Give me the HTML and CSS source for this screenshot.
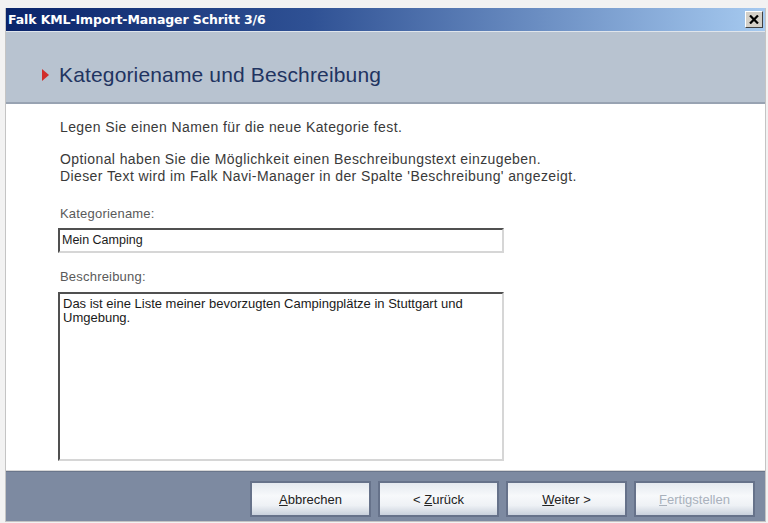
FILE: index.html
```html
<!DOCTYPE html>
<html lang="de">
<head>
  <meta charset="UTF-8">
  <title>Falk KML-Import-Manager</title>
  <link rel="stylesheet" href="styles.css">
</head>
<body>

  <div class="dialog">
    <!-- Titelleiste -->
    <div class="titlebar">
      <span class="title">Falk KML-Import-Manager Schritt 3/6</span>
      <span class="close-btn">
        <svg width="10" height="9" viewBox="0 0 10 9">
          <path d="M1 0.5 L9 8.5 M9 0.5 L1 8.5" stroke="#000" stroke-width="2.2"/>
        </svg>
      </span>
    </div>

    <!-- Kopfbereich -->
    <div class="header">
      <span class="arrow"></span>
      <h1>Kategoriename und Beschreibung</h1>
    </div>

    <!-- Inhalt -->
    <div class="content">
      <p class="intro">Legen Sie einen Namen für die neue Kategorie fest.</p>
      <p class="intro second">Optional haben Sie die Möglichkeit einen Beschreibungstext einzugeben.<br>
        Dieser Text wird im Falk Navi-Manager in der Spalte 'Beschreibung' angezeigt.</p>

      <div class="label">Kategoriename:</div>
      <div class="field">Mein Camping</div>

      <div class="label label-desc">Beschreibung:</div>
      <div class="field area">Das ist eine Liste meiner bevorzugten Campingplätze in Stuttgart und<br>Umgebung.</div>
    </div>

    <!-- Knopfleiste -->
    <div class="footer">
      <button class="btn"><u>A</u>bbrechen</button>
      <button class="btn">&lt; <u>Z</u>urück</button>
      <button class="btn"><u>W</u>eiter &gt;</button>
      <button class="btn disabled"><u>F</u>ertigstellen</button>
    </div>
  </div>

</body>
</html>
```

FILE: styles.css
```css
body {
  margin: 0;
  padding: 8px 0 0 5px;
  background: #f2f2f2;
  font-family: 'Liberation Sans', Arial, sans-serif;
}

.dialog {
  width: 759px;
  border: 1px solid #c4c4c4;
  border-top: none;
  background: #fff;
}

.titlebar {
  height: 23px;
  display: flex;
  align-items: center;
  justify-content: space-between;
  padding: 0 2px 0 2px;
  background: linear-gradient(to right, #0a246a 0%, #2f5194 40%, #a6caf0 100%);
}

.title {
  color: #fff;
  font-family: 'DejaVu Sans', Verdana, sans-serif;
  font-weight: bold;
  font-size: 12.5px;
  letter-spacing: -0.1px;
}

.close-btn {
  width: 16px;
  height: 15px;
  display: flex;
  align-items: center;
  justify-content: center;
  background: #d4d0c8;
  border: 1px solid;
  border-color: #fff #404040 #404040 #fff;
}

.header {
  height: 73px;
  box-sizing: border-box;
  display: flex;
  align-items: center;
  padding: 16px 0 0 36px;
  background: #b8c3d0;
  border-top: 1px solid #dfe5ec;
  border-bottom: 2px solid #98a3b2;
}

.arrow {
  width: 0;
  height: 0;
  margin-right: 10px;
  border-top: 6px solid transparent;
  border-bottom: 6px solid transparent;
  border-left: 7px solid #d12d2a;
}

.header h1 {
  margin: 0;
  font-size: 21px;
  font-weight: normal;
  letter-spacing: 0.15px;
  color: #1f3461;
}

.content {
  height: 367px;
  box-sizing: border-box;
  padding: 15px 0 0 54px;
  border-bottom: 1px solid #d8d8d8;
}

.intro {
  margin: 0;
  font-size: 14px;
  line-height: 17px;
  letter-spacing: 0.4px;
  color: #3a3a3a;
}

.intro.second {
  margin-top: 15px;
}

.label {
  margin: 20px 0 6px;
  font-size: 13px;
  line-height: 17px;
  letter-spacing: 0.2px;
  color: #5a5a5a;
}

.label-desc {
  margin: 15px 0 7px;
}

.field {
  width: 446px;
  height: 25px;
  box-sizing: border-box;
  margin-left: -2px;
  padding: 0 0 0 2px;
  border: 2px solid;
  border-color: #505050 #d6d6d6 #d6d6d6 #505050;
  font-size: 12.5px;
  line-height: 21px;
  color: #1a1a1a;
}

.field.area {
  height: 169px;
  padding: 3px 3px;
  font-size: 13px;
  line-height: 14px;
}

.footer {
  height: 50px;
  display: flex;
  justify-content: flex-end;
  align-items: flex-start;
  gap: 7px;
  padding: 9px 10px 0 0;
  box-sizing: border-box;
  background: #7d8aa1;
  border-top: 1px solid #6a768b;
}

.btn {
  width: 121px;
  height: 36px;
  padding: 0;
  font-family: 'Liberation Sans', Arial, sans-serif;
  font-size: 13px;
  color: #222;
  background: linear-gradient(to bottom, #e4e9ef 0%, #f7f9fb 40%, #eef1f5 70%, #c9d1dc 100%);
  border: 2px solid #66728a;
  border-radius: 0;
}

.btn.disabled {
  color: #a9b1bc;
}
```
